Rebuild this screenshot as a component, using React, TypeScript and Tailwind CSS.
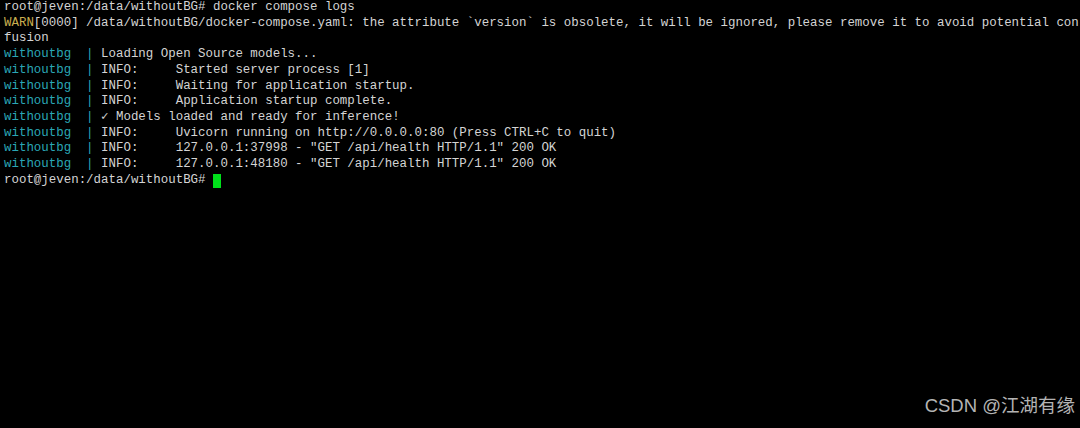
import React from "react";

const mono = "font-['Liberation_Mono','DejaVu_Sans_Mono',monospace]";

const logs = [
  "Loading Open Source models...",
  "INFO:     Started server process [1]",
  "INFO:     Waiting for application startup.",
  "INFO:     Application startup complete.",
  "✓ Models loaded and ready for inference!",
  "INFO:     Uvicorn running on http://0.0.0.0:80 (Press CTRL+C to quit)",
  'INFO:     127.0.0.1:37998 - "GET /api/health HTTP/1.1" 200 OK',
  'INFO:     127.0.0.1:48180 - "GET /api/health HTTP/1.1" 200 OK',
];

export default function App() {
  return (
    <div className="relative w-[1080px] h-[428px] bg-black overflow-hidden">
      <div
        className={`${mono} text-[12.45px] leading-[15.7px] text-[#d4d4d4] pl-[4px] whitespace-pre`}
      >
        <div>root@jeven:/data/withoutBG# docker compose logs</div>
        {/* terminal wraps the long warning at the window edge */}
        <div>
          <span className="text-[#c9ae4f]">WARN</span>[0000] /data/withoutBG/docker-compose.yaml: the attribute `version` is obsolete, it will be ignored, please remove it to avoid potential con
        </div>
        <div>fusion</div>
        {logs.map((line, i) => (
          <div key={i}>
            <span className="text-[#2aa7b6]">withoutbg  | </span>
            {line}
          </div>
        ))}
        <div className="flex items-center">
          <span>root@jeven:/data/withoutBG# </span>
          <span className="inline-block w-[8px] h-[14px] bg-[#00e01a]" />
        </div>
      </div>

      {/* watermark */}
      <div className="absolute right-[5px] bottom-[8px] font-['Liberation_Sans','Noto_Sans_CJK_SC',sans-serif] text-[18.5px] text-[#b4b4b4]">
        CSDN @江湖有缘
      </div>
    </div>
  );
}
